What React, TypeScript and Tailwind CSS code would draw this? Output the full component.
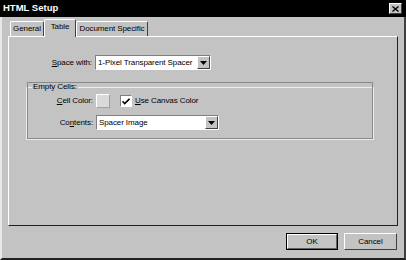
import React from 'react'

const raised = 'border border-t-white border-l-white border-r-[#404040] border-b-[#404040]'

const Dropdown = ({ value, width }: { value: string; width: string }) => (
  <div className={`${width} h-[15px] flex items-center bg-white border border-t-[#808080] border-l-[#808080] border-r-white border-b-white`}>
    <span className="flex-1 pl-[2px] whitespace-nowrap leading-none">{value}</span>
    <span className={`w-[13px] h-[13px] flex items-center justify-center bg-[#c3c3c3] ${raised}`}>
      <svg width="7" height="4" viewBox="0 0 7 4">
        <path d="M0 0h7L3.5 4z" fill="#000" />
      </svg>
    </span>
  </div>
)

const Tab = ({ label, active, className }: { label: string; active?: boolean; className?: string }) => (
  <div
    className={`${className} flex items-center justify-center whitespace-nowrap border-t border-l border-r border-t-white border-l-white border-r-[#404040] rounded-t-[2px] ${
      active ? 'h-[18px] relative z-10 -mb-[1px] bg-[#c3c3c3] pb-[3px]' : 'h-[15px]'
    }`}
  >
    {label}
  </div>
)

const App = () => {
  return (
    <div className="w-[406px] h-[260px] flex flex-col bg-[#c3c3c3] text-black text-[8px] tracking-[-0.1px] font-['Liberation_Sans',Arial,sans-serif] overflow-hidden">
      <div className="h-[17px] bg-black flex items-center justify-between pl-[3px] pr-[4px]">
        <span className="text-white font-bold text-[9.5px] tracking-normal">HTML Setup</span>
        <span className={`w-[13px] h-[11px] bg-[#c3c3c3] flex items-center justify-center ${raised}`}>
          <svg width="7" height="6" viewBox="0 0 7 6">
            <path d="M0.5 0.5l6 5M6.5 0.5l-6 5" stroke="#000" strokeWidth="1.4" />
          </svg>
        </span>
      </div>

      <div className="flex-1 flex flex-col border-l-2 border-l-[#e8e8e8] border-r-2 border-r-[#404040] border-b-2 border-b-[#202020] pl-[6px] pr-[6px]">
        <div className="h-[19px] flex items-end pl-[2px]">
          <Tab label="General" className="w-[34px]" />
          <Tab label="Table" active className="w-[32px]" />
          <Tab label="Document Specific" className="w-[72px]" />
        </div>

        <div className="h-[190px] border border-t-white border-l-white border-r-[#202020] border-b-[#202020] pl-[1px] pt-[18px]">
          <div className="flex items-center">
            <span className="w-[85px] text-right pr-[3px]">
              <u>S</u>pace with:
            </span>
            <Dropdown value="1-Pixel Transparent Spacer" width="w-[116px]" />
          </div>

          <fieldset className="ml-[16px] mt-[11px] w-[348px] h-[59px] border border-[#ececec] outline outline-1 outline-[#8a8a8a] -outline-offset-2 px-0">
            <legend className="ml-[5px] px-[1px]">Empty Cells:</legend>
            <div className="flex items-center mt-[1px]">
              <span className="w-[69px] text-right pr-[3px]">
                <u>C</u>ell Color:
              </span>
              <span className="w-[14px] h-[14px] bg-[#dadada] border border-t-white border-l-white border-r-[#a0a0a0] border-b-[#a0a0a0]" />
              <span className="ml-[10px] w-[12px] h-[12px] bg-white border border-t-[#808080] border-l-[#808080] border-r-white border-b-white flex items-center justify-center">
                <svg width="8" height="7" viewBox="0 0 8 7">
                  <path d="M0.5 3.2l2.2 2.3L7.5 0.8" stroke="#000" strokeWidth="1.6" fill="none" />
                </svg>
              </span>
              <span className="ml-[3px]">
                <u>U</u>se Canvas Color
              </span>
            </div>
            <div className="flex items-center mt-[7px]">
              <span className="w-[69px] text-right pr-[3px]">
                Co<u>n</u>tents:
              </span>
              <Dropdown value="Spacer Image" width="w-[123px]" />
            </div>
          </fieldset>
        </div>

        <div className="flex justify-end gap-[6px] pt-[7px] pr-[1px]">
          <button className="w-[52px] h-[17px] border border-black flex items-center justify-center bg-[#c3c3c3]">
            <span className="w-full h-full flex items-center justify-center border border-t-white border-l-white border-r-[#606060] border-b-[#606060]">
              OK
            </span>
          </button>
          <button className={`w-[53px] h-[17px] flex items-center justify-center bg-[#c3c3c3] ${raised}`}>Cancel</button>
        </div>
      </div>
    </div>
  )
}

export default App
